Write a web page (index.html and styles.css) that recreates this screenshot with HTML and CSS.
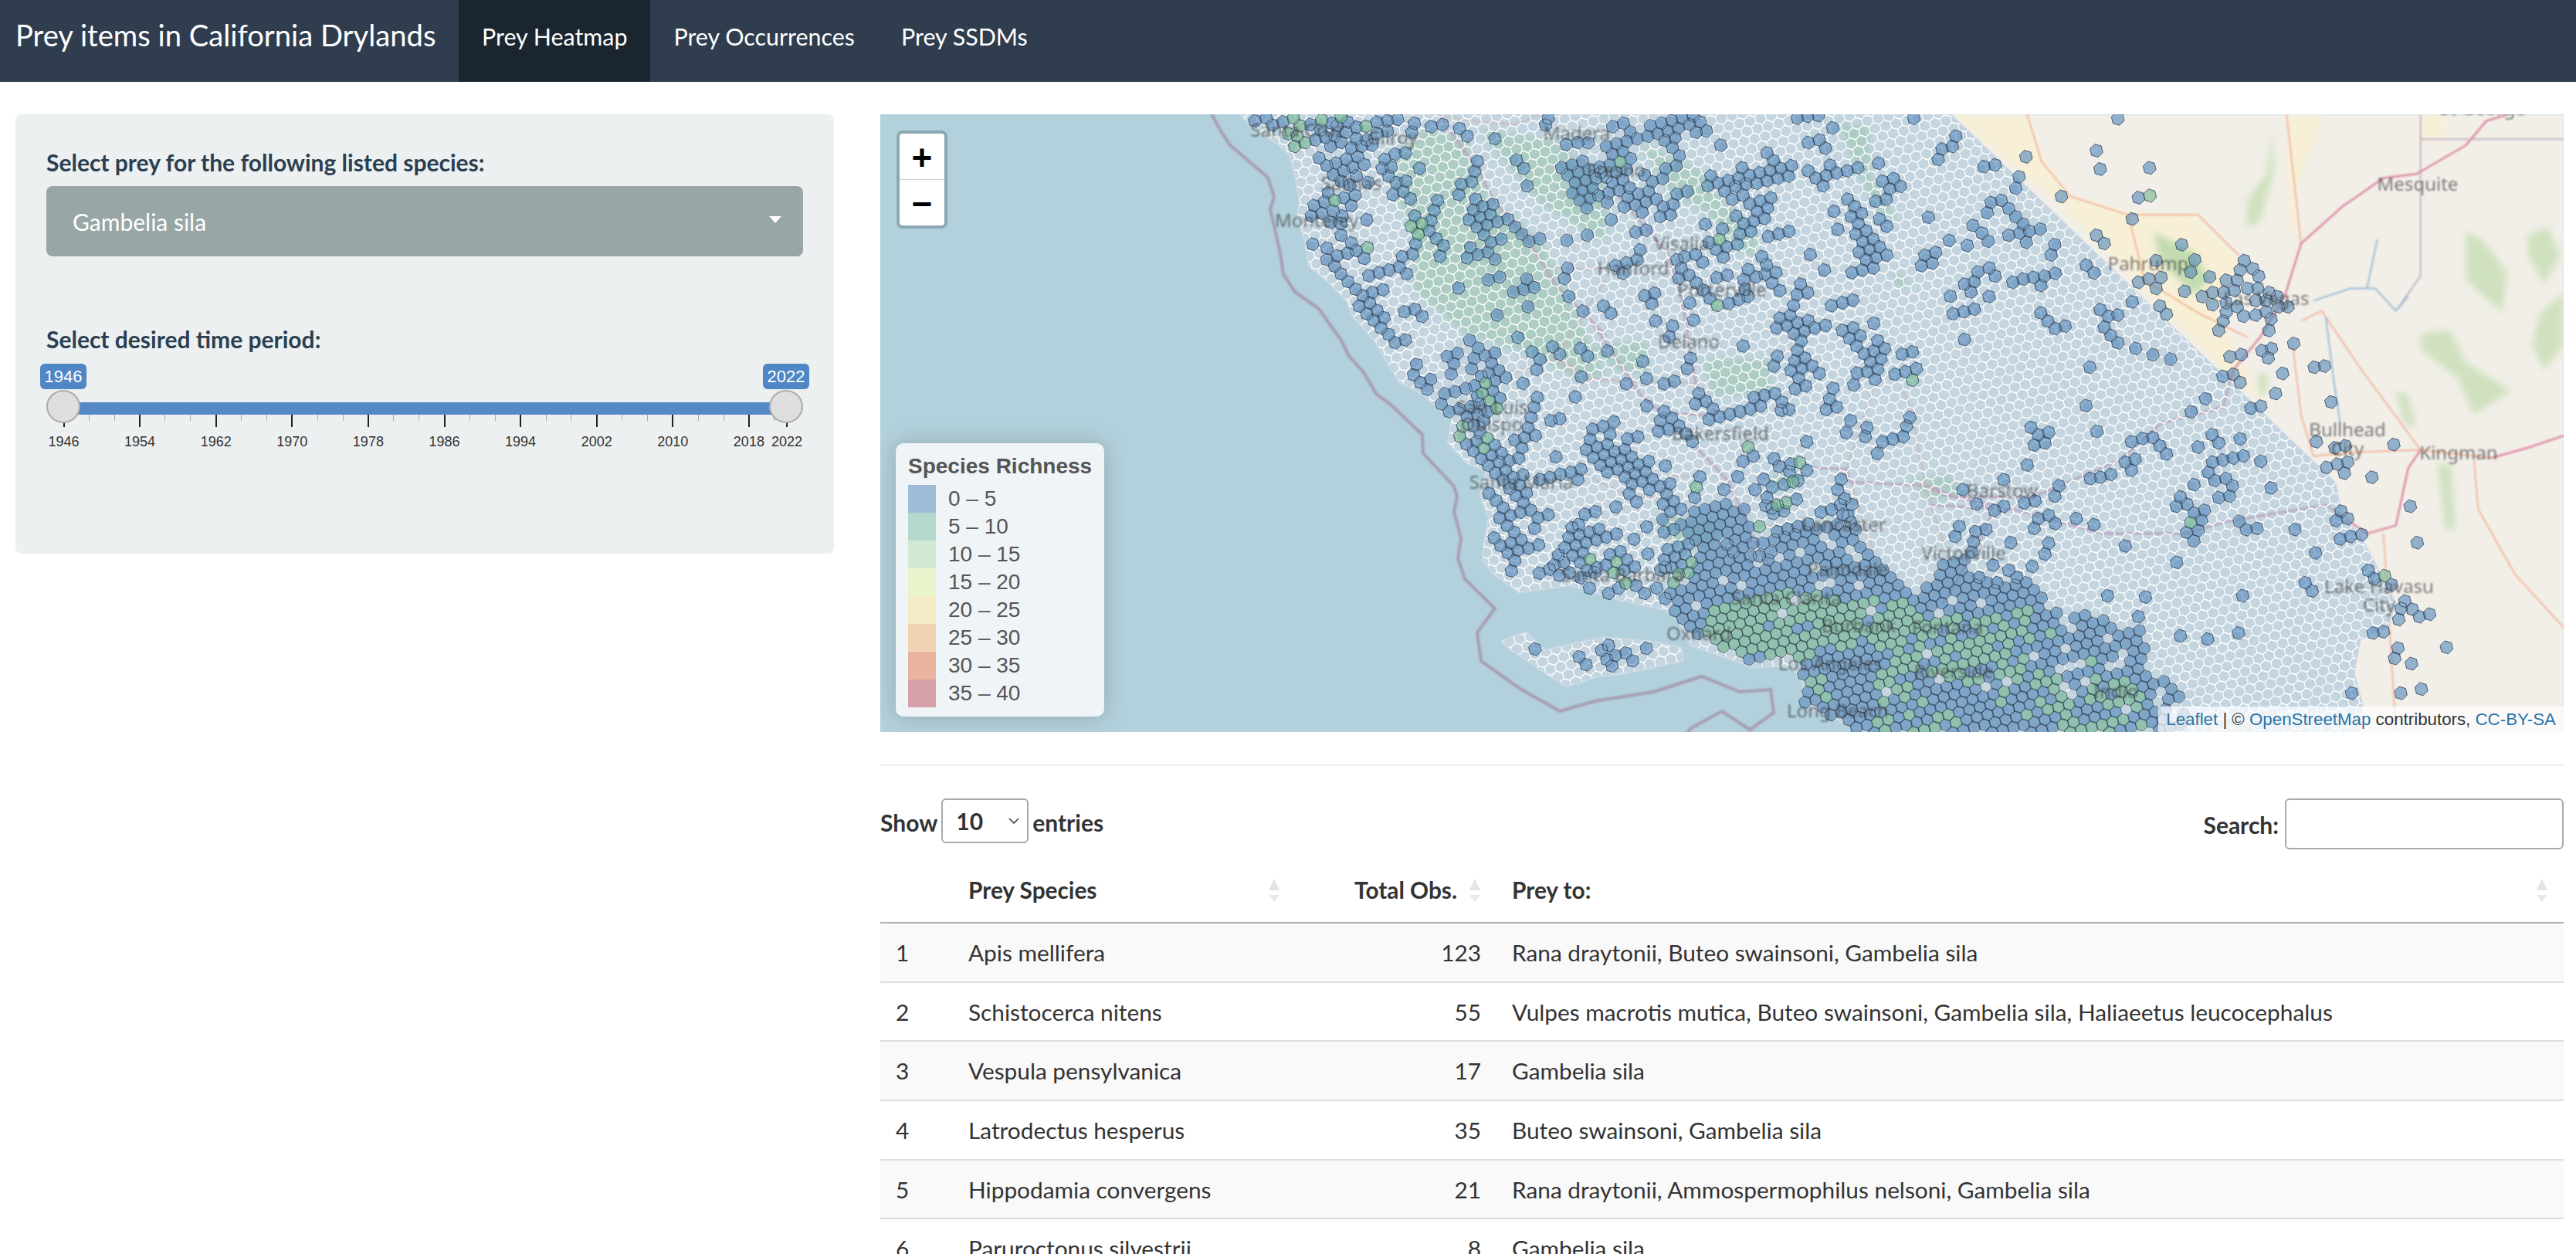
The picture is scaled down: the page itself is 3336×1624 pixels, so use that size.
FILE: index.html
```html
<!DOCTYPE html>
<html lang="en">
<head>
    <meta charset="UTF-8">
    <title>Prey items in California Drylands</title>
    <link rel="stylesheet" href="styles.css">
</head>
<body>
    <nav class="navbar">
        <a class="brand">Prey items in California Drylands</a>
        <a class="nav-item active">Prey Heatmap</a>
        <a class="nav-item">Prey Occurrences</a>
        <a class="nav-item">Prey SSDMs</a>
    </nav>

    <div class="page">
        <aside class="sidebar">
            <label class="field-label">Select prey for the following listed species:</label>
            <div class="picker">
                <span>Gambelia sila</span>
                <i class="caret"></i>
            </div>

            <label class="field-label period-label">Select desired time period:</label>
            <div class="slider">
                <span class="badge badge-from">1946</span>
                <span class="badge badge-to">2022</span>
                <div class="slider-bar"></div>
                <div class="minor-ticks"></div>
                <i class="tick" style="left: 21.5px"></i><span class="tick-label" style="left: 21.5px">1946</span>
                <i class="tick" style="left: 120.1px"></i><span class="tick-label" style="left: 120.1px">1954</span>
                <i class="tick" style="left: 218.7px"></i><span class="tick-label" style="left: 218.7px">1962</span>
                <i class="tick" style="left: 317.3px"></i><span class="tick-label" style="left: 317.3px">1970</span>
                <i class="tick" style="left: 415.9px"></i><span class="tick-label" style="left: 415.9px">1978</span>
                <i class="tick" style="left: 514.5px"></i><span class="tick-label" style="left: 514.5px">1986</span>
                <i class="tick" style="left: 613.1px"></i><span class="tick-label" style="left: 613.1px">1994</span>
                <i class="tick" style="left: 711.7px"></i><span class="tick-label" style="left: 711.7px">2002</span>
                <i class="tick" style="left: 810.3px"></i><span class="tick-label" style="left: 810.3px">2010</span>
                <i class="tick" style="left: 908.9px"></i><span class="tick-label" style="left: 908.9px">2018</span>
                <i class="tick" style="left: 958.1px"></i><span class="tick-label" style="left: 958.1px">2022</span>
                <span class="handle handle-from"></span>
                <span class="handle handle-to"></span>
            </div>
        </aside>

        <main class="content">
            <div class="map" id="map">
                <div class="zoom-control">
                    <a>+</a>
                    <a>&minus;</a>
                </div>
                <div class="legend">
                    <strong>Species Richness</strong>
                    <div class="legend-row"><i class="c1"></i>0 &ndash; 5</div>
                    <div class="legend-row"><i class="c2"></i>5 &ndash; 10</div>
                    <div class="legend-row"><i class="c3"></i>10 &ndash; 15</div>
                    <div class="legend-row"><i class="c4"></i>15 &ndash; 20</div>
                    <div class="legend-row"><i class="c5"></i>20 &ndash; 25</div>
                    <div class="legend-row"><i class="c6"></i>25 &ndash; 30</div>
                    <div class="legend-row"><i class="c7"></i>30 &ndash; 35</div>
                    <div class="legend-row"><i class="c8"></i>35 &ndash; 40</div>
                </div>
                <div class="attribution"><a>Leaflet</a> | &copy; <a>OpenStreetMap</a> contributors, <a>CC-BY-SA</a></div>
            </div>

            <hr class="divider">

            <div class="table-controls">
                <div class="length-control">
                    <span>Show</span>
                    <div class="length-select">10<svg width="14" height="8" viewBox="0 0 14 8"><path d="M1 1l6 6 6-6" fill="none" stroke="#333" stroke-width="1.5"/></svg></div>
                    <span>entries</span>
                </div>
                <div class="search-control">
                    <span>Search:</span>
                    <div class="search-input"></div>
                </div>
            </div>

            <table class="prey-table">
                <colgroup>
                    <col class="col-num"><col class="col-species"><col class="col-total"><col>
                </colgroup>
                <thead>
                    <tr>
                        <th></th>
                        <th class="sortable">Prey Species</th>
                        <th class="sortable total-head">Total Obs.</th>
                        <th class="sortable">Prey to:</th>
                    </tr>
                </thead>
                <tbody>
                    <tr><td>1</td><td>Apis mellifera</td><td class="num">123</td><td>Rana draytonii, Buteo swainsoni, Gambelia sila</td></tr>
                    <tr><td>2</td><td>Schistocerca nitens</td><td class="num">55</td><td>Vulpes macrotis mutica, Buteo swainsoni, Gambelia sila, Haliaeetus leucocephalus</td></tr>
                    <tr><td>3</td><td>Vespula pensylvanica</td><td class="num">17</td><td>Gambelia sila</td></tr>
                    <tr><td>4</td><td>Latrodectus hesperus</td><td class="num">35</td><td>Buteo swainsoni, Gambelia sila</td></tr>
                    <tr><td>5</td><td>Hippodamia convergens</td><td class="num">21</td><td>Rana draytonii, Ammospermophilus nelsoni, Gambelia sila</td></tr>
                    <tr><td>6</td><td>Paruroctonus silvestrii</td><td class="num">8</td><td>Gambelia sila</td></tr>
                </tbody>
            </table>
        </main>
    </div>

    <script src="map.js"></script>
</body>
</html>
```

FILE: styles.css
```css
html, body {
    height: 100%;
    margin: 0;
    overflow: hidden;
}
body {
    font-family: Lato, "Liberation Sans", sans-serif;
    font-size: 30px;
    color: #333;
    background-color: #fff;
}
.navbar {
    display: flex;
    align-items: stretch;
    height: 106px;
    background-color: #2f3d4f;
    color: #fff;
}
.brand {
    width: 574px;
    margin-left: 20px;
    font-size: 38.2px;
    line-height: 90px;
    white-space: nowrap;
}
.nav-item {
    padding: 0 30px;
    font-size: 30.4px;
    line-height: 94px;
    white-space: nowrap;
}
.nav-item.active {
    background-color: #1b252f;
}
.page {
    display: flex;
    gap: 60px;
    padding: 42px 16px 0 20px;
}
.sidebar {
    flex: 0 0 1060px;
    box-sizing: border-box;
    height: 569px;
    padding: 40px;
    background-color: #ecf0f1;
    border-radius: 8px;
}
.field-label {
    display: block;
    height: 53px;
    line-height: 44px;
    font-weight: bold;
    color: #2c3e50;
}
.picker {
    display: flex;
    align-items: center;
    justify-content: space-between;
    height: 91px;
    padding: 0 28px 0 34px;
    background-color: #98a6a6;
    border-radius: 8px;
    color: #fff;
}
.caret {
    width: 0;
    height: 0;
    margin-top: -4px;
    border-left: 8px solid transparent;
    border-right: 8px solid transparent;
    border-top: 9px solid #fff;
}
.period-label {
    margin-top: 85px;
    height: 54px;
}
.slider {
    position: relative;
    height: 120px;
}
.badge {
    position: absolute;
    top: 0;
    width: 60px;
    height: 33px;
    line-height: 33px;
    text-align: center;
    font-family: "Liberation Sans", sans-serif;
    font-size: 22px;
    color: #fff;
    background-color: #4f86c6;
    border-radius: 6px;
}
.badge-from {
    left: -8px;
}
.badge-to {
    right: -8px;
}
.slider-bar {
    position: absolute;
    top: 50px;
    left: 20px;
    right: 20px;
    height: 16px;
    background-color: #5588c6;
}
.minor-ticks {
    position: absolute;
    top: 66px;
    left: 21.5px;
    width: 937px;
    height: 8px;
    background: repeating-linear-gradient(90deg, #aaa 0, #aaa 1px, transparent 1px, transparent 32.87px);
}
.tick {
    position: absolute;
    top: 66px;
    width: 2px;
    height: 16px;
    background-color: #222;
}
.tick-label {
    position: absolute;
    top: 90px;
    width: 60px;
    margin-left: -29px;
    text-align: center;
    font-family: "Liberation Sans", sans-serif;
    font-size: 18px;
    line-height: 22px;
    color: #333;
}
.handle {
    position: absolute;
    top: 34px;
    width: 44px;
    height: 43px;
    box-sizing: border-box;
    background-color: #dedede;
    border: 2px solid #ababab;
    border-radius: 50%;
}
.handle-from {
    left: 0;
}
.handle-to {
    right: 0;
}
.content {
    flex: 1;
    min-width: 0;
}
.map {
    position: relative;
    height: 800px;
    overflow: hidden;
    background-color: #b3d1dc;
}
.map svg {
    display: block;
}
.zoom-control {
    position: absolute;
    top: 21px;
    left: 21px;
    width: 58px;
    border: 4px solid #8ba7b1;
    border-radius: 8px;
    background-color: #fff;
}
.zoom-control a {
    display: block;
    height: 59px;
    line-height: 62px;
    text-align: center;
    font-family: "Liberation Sans", sans-serif;
    font-weight: bold;
    font-size: 46px;
    color: #000;
}
.zoom-control a:first-child {
    border-bottom: 1px solid #ccc;
}
.legend {
    position: absolute;
    left: 20px;
    bottom: 20px;
    box-sizing: border-box;
    width: 270px;
    height: 354px;
    padding: 14px 16px;
    font-family: "Liberation Sans", sans-serif;
    font-size: 28px;
    color: #555;
    background-color: #eff4f7;
    border-radius: 10px;
    box-shadow: 0 0 30px rgba(0, 0, 0, 0.2);
}
.legend strong {
    display: block;
    height: 40px;
    line-height: 32px;
    white-space: nowrap;
}
.legend-row {
    display: flex;
    align-items: center;
    gap: 16px;
    height: 36px;
}
.legend-row i {
    width: 36px;
    height: 36px;
}
.c1 { background-color: #9ebcd7; }
.c2 { background-color: #b4d9cc; }
.c3 { background-color: #d1e9d3; }
.c4 { background-color: #e8f4cc; }
.c5 { background-color: #f3ecc6; }
.c6 { background-color: #f0d3b3; }
.c7 { background-color: #e8b4a0; }
.c8 { background-color: #d8a0a8; }
.attribution {
    position: absolute;
    right: 0;
    bottom: 0;
    padding: 0 10px;
    height: 33px;
    line-height: 33px;
    font-family: "Liberation Sans", sans-serif;
    font-size: 22.3px;
    color: #333;
    background-color: rgba(255, 255, 255, 0.7);
}
.attribution a {
    color: #2a74a8;
}
.divider {
    height: 2px;
    margin: 42px 0;
    border: none;
    background-color: #ecf0f1;
}
.table-controls {
    display: flex;
    justify-content: space-between;
    height: 76px;
    font-weight: bold;
}
.length-control {
    display: flex;
    align-items: flex-start;
    gap: 5px;
    line-height: 62px;
}
.length-select {
    display: flex;
    align-items: center;
    justify-content: space-between;
    box-sizing: border-box;
    width: 113px;
    height: 58px;
    padding: 0 10px 0 17px;
    border: 2px solid #aaa;
    border-radius: 6px;
}
.search-control {
    display: flex;
    align-items: flex-start;
    gap: 8px;
    line-height: 68px;
}
.search-input {
    box-sizing: border-box;
    width: 361px;
    height: 66px;
    border: 2px solid #aaa;
    border-radius: 6px;
}
.prey-table {
    width: 100%;
    table-layout: fixed;
    border-collapse: collapse;
    font-size: 29.8px;
}
.col-num { width: 94px; }
.col-species { width: 444px; }
.col-total { width: 260px; }
.prey-table th {
    position: relative;
    height: 84px;
    padding: 0 20px;
    text-align: left;
    border-bottom: 2px solid #b0b0b0;
}
.prey-table th.total-head {
    padding-right: 51px;
    text-align: right;
}
.prey-table th.sortable::before,
.prey-table th.sortable::after {
    content: "";
    position: absolute;
    right: 21px;
    border-left: 7.5px solid transparent;
    border-right: 7.5px solid transparent;
}
.prey-table th.sortable::before {
    top: 28px;
    border-bottom: 15px solid #e4e4e4;
}
.prey-table th.sortable::after {
    top: 49px;
    border-top: 9px solid #e8e8e8;
}
.prey-table td {
    height: 74.7px;
    padding: 0 20px;
    white-space: nowrap;
    border-bottom: 2px solid #ddd;
}
.prey-table td.num {
    text-align: right;
}
.prey-table tbody tr:nth-child(odd) {
    background-color: #f9f9f9;
}
```

FILE: map.js
```js
// Draws the basemap and the hexagon richness layer. Point lists were read off
// the map at different crops, so each one carries its own offset and scale.
const W = 2180, H = 800;

// hex lattice
const ax = 13.65, ay = -3.3, bx = 3.85, by = -13.15;
const R = 8.1;
const tilt = Math.atan2(ay, ax) + Math.PI / 6;

function hexPath(cx, cy, r) {
    let d = '';
    for (let k = 0; k < 6; k++) {
        const t = tilt + k * Math.PI / 3;
        d += (k ? 'L' : 'M') + (cx + r * Math.cos(t)).toFixed(1) + ' ' + (cy + r * Math.sin(t)).toFixed(1);
    }
    return d + 'Z';
}

function conv(o, pts) {
    const out = [];
    for (let k = 0; k < pts.length; k += 2) {
        out.push([o[0] + pts[k] / o[2], o[1] + pts[k + 1] / o[3]]);
    }
    return out;
}

function line(pts) {
    return 'M' + pts.map(p => p[0].toFixed(1) + ' ' + p[1].toFixed(1)).join('L');
}

const Z4 = [1360, -18, 1.875, 1.889];
const Z6 = [760, 352, 2.24, 2.98];
const Z7 = [440, 0, 3, 3];
const Z8 = [920, 0, 3, 3];
const Z9 = [660, 282, 3, 3];
const Z10 = [1010, 492, 3, 3];
const RAW = [0, 0, 1, 1];

// coast, north to south
const coast = [467,0, 473,8, 490,23, 513,37, 530,52, 537,77, 543,113, 540,133, 550,163, 555,197, 580,217, 603,240, 613,263, 640,293, 660,327, 673,347, 703,363, 733,390, 740,395, 735,425, 760,452, 785,462, 777,495, 788,522, 782,555, 780,577, 793,594, 827,619, 894,610, 961,630, 1028,644, 1050,688, 1131,716, 1180,714, 1195,738, 1193,765, 1282,802];
const river = [1915,802, 1920,765, 1909,723, 1917,681, 1952,665, 1963,633, 1933,575, 1915,543, 1893,517, 1885,477, 1387,0];
const island = conv(Z6, [100,985, 170,950, 225,1020, 340,985, 400,970, 530,985, 620,1010, 625,1060, 450,1110, 380,1120, 290,1160, 230,1110, 130,1020]);

const coastPts = conv(RAW, coast);
const caPts = coastPts.concat(conv(RAW, river));
const landPts = coastPts.concat(conv(RAW, [2180,802, 2180,0]));

const sea = conv(RAW, [429,0, 440,20, 453,40, 473,57, 502,82, 510,107, 505,123, 518,180, 522,207, 537,230, 568,252, 597,293, 607,313, 625,333, 643,363, 660,375, 702,415, 703,439, 743,482, 747,495, 743,515, 752,549, 748,575, 757,602, 796,640, 773,671, 778,708, 827,743, 880,773, 925,760, 1001,748, 1064,728, 1113,748, 1153,745, 1157,775, 1126,797, 1090,773, 1050,795, 1043,803]);

const desert = [
    conv(Z4, [50,35, 230,35, 270,140, 340,235, 480,275, 640,280, 760,400, 690,500, 800,730, 740,690, 300,240]),
    conv(Z4, [865,35, 955,35, 890,210, 885,340, 870,300]),
    conv(Z4, [1190,35, 1250,35, 1250,90, 1190,100])
];
const nevadaParks = [
    conv(Z4, [830,70, 835,170, 800,300, 765,310, 770,240, 815,180]),
    conv(Z4, [1190,570, 1260,560, 1300,640, 1410,710, 1320,770, 1280,680, 1190,610]),
    conv(Z4, [1300,320, 1340,340, 1400,420, 1390,520, 1300,440]),
    conv(Z4, [1450,330, 1500,310, 1530,380, 1490,450, 1450,380]),
    conv(Z4, [1480,520, 1538,470, 1538,600, 1490,660, 1460,600]),
    conv(Z4, [1130,710, 1160,720, 1180,800, 1150,790]),
    conv(Z4, [1230,890, 1265,890, 1275,1050, 1250,1050]),
    conv(Z4, [795,665, 820,670, 815,720, 798,720])
];
const parks = [
    conv(Z4, [540,320, 640,370, 680,440, 640,475, 560,400]),
    conv(Z7, [700,120, 800,60, 950,90, 1050,330, 1250,500, 1400,800, 1500,1020, 1380,1030, 1250,950, 950,850, 750,680, 760,500, 680,300]),
    conv(Z7, [1000,60, 1300,100, 1500,260, 1500,500, 1250,350]),
    conv(Z8, [190,110, 340,180, 420,210, 480,300, 650,470, 640,560, 560,520, 470,400, 300,300]),
    conv(Z8, [430,950, 700,950, 700,1080, 480,1100]),
    conv(Z8, [960,30, 1080,50, 1090,250, 1200,420, 1100,360, 1020,180]),
    conv(Z8, [0,900, 220,880, 220,1010, 100,1000]),
    conv(Z8, [1170,610, 1240,640, 1220,680, 1180,660]),
    conv(Z6, [550,500, 750,520, 700,640, 570,590]),
    conv(Z6, [880,340, 960,330, 940,400, 880,400]),
    conv(Z6, [1280,360, 1400,340, 1440,420, 1340,450])
];

const highways = [
    conv(Z7, [850,0, 890,60, 1000,210, 1060,330, 1200,490, 1300,660, 1500,860]),
    conv(Z8, [0,800, 100,950, 200,1100, 280,1160, 480,1170]),
    conv(Z8, [100,310, 300,540, 350,700, 410,1060, 500,1170]),
    conv(Z6, [660,230, 760,370, 820,560, 880,700]),
    conv(Z6, [1000,315, 1100,320, 1110,370, 1340,385, 1420,430, 1530,460, 1500,570, 1380,840]),
    conv(Z4, [900,350, 1000,260, 1100,190, 1180,180, 1300,110, 1350,50, 1400,35]),
    conv(Z4, [0,950, 50,970, 250,970, 460,880, 560,790, 710,750, 735,660, 800,580, 860,480, 900,350]),
    conv(Z4, [0,990, 200,1000, 420,1060, 620,1060, 720,1030, 960,990, 1060,1060, 1130,1040, 1160,900, 1190,855]),
    conv(Z4, [1360,875, 1450,850, 1538,820])
];
const minorRoads = [
    conv(Z4, [235,35, 270,150, 340,235, 480,280, 490,320, 520,440, 650,520, 770,580]),
    conv(Z4, [480,280, 650,280, 750,380]),
    conv(Z4, [865,35, 900,350]),
    conv(Z4, [880,600, 900,770, 930,870, 1040,860, 1190,855, 1040,650, 950,515, 900,540]),
    conv(Z4, [1190,855, 1360,875]),
    conv(Z4, [1320,880, 1330,1000, 1420,1160, 1538,1290]),
    conv(Z4, [1100,1060, 1130,1540]),
    conv(Z7, [840,0, 1000,30, 1150,40, 1240,0]),
    conv(Z7, [1280,600, 1500,600]),
    conv(Z7, [1500,640, 1300,950, 1400,1030, 1500,1030]),
    conv(Z9, [470,160, 660,100, 780,185, 1200,200]),
    conv(Z9, [750,550, 930,640, 1060,640, 1080,560, 1200,560]),
    conv(Z6, [1180,0, 1100,320, 1180,640]),
    conv(Z6, [1260,0, 1290,100, 1330,390, 1390,640]),
    conv(Z6, [860,540, 1100,540, 1090,320])
];
const stateLine = [
    conv(Z4, [1190,35, 1190,430, 1130,515]),
    conv(Z4, [1190,95, 1538,95])
];
const water = [
    conv(Z4, [930,490, 1020,460, 1080,460, 1130,515, 1160,480]),
    conv(Z4, [1085,340, 1060,460]),
    conv(Z4, [960,530, 980,690, 995,790])
];

const labels = [
    ['Santa Cruz',540,23], ['Gilroy',663,33], ['Madera',902,27], ['Salinas',610,92], ['Monterey',565,140],
    ['Fresno',953,75], ['Visalia',1038,170], ['Hanford',975,202], ['Porterville',1090,230], ['Delano',1047,297],
    ['San Luis',792,382], ['Obispo',792,404], ['Bakersfield',1088,416], ['Santa Maria',830,479], ['Lancaster',1248,534],
    ['Santa Barbara',961,599], ['Palmdale',1253,592], ['Santa Clarita',1173,629], ['Oxnard',1060,675], ['Burbank',1267,665],
    ['Fontana',1382,667], ['Los Angeles',1230,714], ['Riverside',1390,724], ['Long Beach',1240,775], ['Indio',1600,750],
    ['Barstow',1453,490], ['Victorville',1403,571], ['Pahrump',1642,196], ['Las Vegas',1795,241], ['Mesquite',1991,93],
    ['Bullhead',1900,411], ['City',1900,436], ['Kingman',2044,441], ['Lake Havasu',1941,614], ['City',1941,638], ['St George',2075,-5]
];

// richness cells placed where they were read off; near-duplicates from
// overlapping crops are dropped
const placed = [];
const buckets = new Map();
function nearPlaced(x, y, dist) {
    const bx0 = Math.floor(x / 16), by0 = Math.floor(y / 16);
    for (let i = bx0 - 1; i <= bx0 + 1; i++) {
        for (let j = by0 - 1; j <= by0 + 1; j++) {
            const list = buckets.get(i + ',' + j);
            if (list && list.some(c => Math.hypot(c[0] - x, c[1] - y) < dist)) return true;
        }
    }
    return false;
}
function place(x, y, kind) {
    const key = Math.floor(x / 16) + ',' + Math.floor(y / 16);
    if (!buckets.has(key)) buckets.set(key, []);
    const c = [x, y, kind, 8.7];
    buckets.get(key).push(c);
    placed.push(c);
}
function add(o, pts, kind) {
    conv(o, pts).forEach(p => {
        if (!nearPlaced(p[0], p[1], 6.5)) place(p[0], p[1], kind);
    });
}

// greens first so they win against blue duplicates
add(Z7, [285,15,310,45,265,75,300,85,290,125,330,110,395,22,470,10,567,47,445,335,784,425,743,435,770,465,573,518,1032,1045,1020,1083,1047,1112,1075,1142], 'g');
add(Z8, [115,185,500,487,492,742,1250,1033], 'g');
add(Z9, [370,198,358,237,387,265,415,297,283,367,272,405,378,413,365,452,777,883,880,893,870,935,1172,895,1160,935,1122,940], 'g');
add(Z6, [360,680,435,685,420,730,460,760,605,730,665,390,815,235,965,295,945,370,900,460,925,450], 'g');
add(Z4, [533,233,632,1033,1103,1163], 'g');
add(Z10, [490,30,385,125], 'g');

add(Z10, [410,45,450,40,530,20,440,75,480,65,625,70,665,60,700,40,745,40,710,80,740,110,350,240,385,240,400,190,430,225,360,190,260,195,285,225,455,145,495,135,535,125,575,115], 'b');

add(Z7, [135,25,180,15,205,42,245,30,350,40,390,60,435,35,455,45,495,30,530,50,610,30,650,25,690,20,650,65,610,75,570,100,530,95,490,70,445,85,410,90,370,100,430,125,470,110,510,130,550,125,590,120,385,170,415,200,450,190,490,175,535,165,560,195,515,205,480,220,440,235,470,260,530,240,575,265,505,275,420,305,480,325,525,315,405,340,365,355,440,375,395,385,355,395,475,395,510,355,430,420,470,425,755,35,745,70,820,48,865,40,930,55,960,85,1068,95,720,150,680,155,640,175,630,210,665,205,775,210,655,240,685,265,722,260,712,300,672,312,740,328,1000,183,990,222,978,262,938,272,928,312,1152,178,1180,210,1193,278,845,335,832,373,820,412,757,395,812,452,840,483,868,510,855,552,760,503,748,543,708,553,697,593,657,605,618,615,578,627,725,620,570,410,530,530,495,540,510,500,470,470,360,505,415,520,455,550,415,565,445,590,560,560,470,620,497,650,527,680,592,692,633,682,555,705,582,733,540,745,610,762,570,775,637,790,597,800,625,830,655,855,680,887,720,877,717,767,757,758,785,785,993,330,1020,358,1060,350,985,372,1010,400,1050,390,968,410,998,437,1037,430,1078,417,1118,408,1145,437,1172,465,1200,493,1242,483,1025,468,1052,497,1092,485,973,518,960,558,1002,545,1040,535,1068,563,1348,490,1427,470,1042,643,1086,632,1192,640,1220,672,1180,680,1140,690,927,675,1197,748,1077,780,1157,867,1350,598,1338,638,1355,708,1410,765,1490,745,1212,923,1243,952,1230,992,1292,903,1320,932,1400,910,1428,940,1403,1020,1177,1045,1380,1098,1232,1100,1220,1138,1208,1178,1285,1190,1320,1183,1345,118,1390,110,1430,110,1408,183,1367,197,1327,207,1350,235,1392,225,1432,215,1380,265,1420,257,1460,250,1408,295,1448,287,1370,305,1398,333,1437,325,1425,363,1480,225,970,878,1003,908,1030,937,1068,927,882,940,922,928,908,968,898,1008,987,948,978,988,1015,1018,1055,967,1045,1005,1083,995,1110,1023,1068,1035,990,1055,1060,1075,1087,1103,955,1065,913,1077,873,1085,860,1125,890,1155,930,1145,975,1135,1000,1095,1010,1125,960,1175,1000,1165,1040,1155,763,972,752,1012,778,1042,818,1030,805,1068,1275,15,1265,42], 'b');

add(Z8, [85,48,127,35,153,68,180,95,232,45,222,85,275,35,260,75,300,65,315,25,355,15,340,55,385,40,425,30,410,70,450,65,328,92,288,102,318,130,345,162,333,200,292,212,398,5,505,120,60,125,100,115,140,105,125,145,85,155,155,172,75,195,35,205,100,225,140,215,60,245,20,255,125,255,85,265,40,235,210,235,240,262,280,250,150,285,110,295,70,305,30,315,0,280,185,310,225,300,65,342,145,322,175,352,130,360,215,340,255,330,200,380,282,360,320,350,335,310,375,300,270,397,310,390,80,410,445,427,175,458,215,450,192,527,97,588,140,577,180,565,125,618,803,15,843,8,885,5,940,53,845,110,888,100,912,132,1255,15,1418,85,1405,125,1365,135,1350,175,1118,190,685,150,710,180,780,200,738,210,697,218,768,240,727,248,685,258,657,227,617,237,588,208,467,240,495,267,455,278,535,258,575,248,563,280,603,270,645,268,520,298,592,315,550,330,700,325,658,337,618,348,687,363,647,377,565,395,675,405,633,415,595,425,622,455,580,465,512,445,460,498,528,515,570,505,488,525,515,555,690,475,730,465,770,455,845,220,875,248,915,238,930,198,955,228,997,220,1038,208,903,278,998,330,1025,358,1052,385,1012,397,1040,425,945,377,960,447,1030,465,1070,453,1122,407,1150,435,1097,485,1057,495,1122,515,1083,525,1150,547,1043,535,1108,557,1070,565,1098,597,1055,605,1015,615,1133,260,1177,250,1203,280,1162,290,1148,330,1107,338,1312,400,1393,490,1463,510,1485,432,1298,548,1340,537,1327,578,1285,588,1452,660,1490,650,1477,690,1397,707,1408,775,1450,767,1490,757,1452,875,853,545,908,605,665,553,683,585,612,603,643,632,720,615,677,622,595,642,705,655,735,685,530,625,490,635,335,565,365,553,408,545,435,575,352,600,342,637,382,625,410,655,437,683,463,715,537,735,575,720,610,708,600,680,385,733,210,705,248,695,237,735,48,745,78,773,252,803,318,822,305,865,400,800,815,660,843,693,802,700,788,743,735,792,775,782,803,810,845,802,722,830,762,820,790,852,830,842,870,830,912,820,818,880,803,917,832,947,793,958,860,978,820,987,778,995,888,1007,808,1025,795,1067,835,1055,935,743,978,732,1018,722,978,840,1020,830,1047,860,1005,870,1033,900,1062,930,1115,880,1100,920,1142,910,1087,962,1128,950,1115,990,1075,1000,1035,1005,1022,1052,1105,1030,1100,812,592,900,725,940,712,978,65,920,202,960,388,948,375,988,217,1027,138,1047,285,1047,325,1037,1182,1010,1223,1000,1265,988,1210,932,1250,923,942,1065,928,1107,955,1137,915,1147,420,1085,407,1125,447,1115,475,1145,635,1100,675,1092,715,1085,743,1118,770,1147,660,1133,620,1145,580,1155,540,1165,500,1175,460,1185,740,1150,218,1133,285,1155,315,1180,90,1195,1240,1178,1010,1190,270,1190], 'b');

add(Z9, [20,40,60,30,105,125,92,163,118,195,160,183,147,222,222,95,262,82,250,122,238,162,312,32,342,62,330,100,370,90,408,80,398,120,318,140,345,170,423,150,452,177,410,188,330,210,295,220,253,230,213,240,200,278,230,310,270,298,312,290,398,225,345,275,427,257,300,330,340,320,380,310,325,365,365,345,297,435,350,392,407,440,337,425,325,462,395,478,355,492,382,518,433,470,425,505,463,500,410,548,450,537,480,565,440,575,517,555,503,595,465,608,490,635,530,625,385,627,413,655,518,662,440,683,507,700,547,692,468,713,427,722,575,722,455,752,562,763,483,778,405,800,430,830,470,820,510,808,458,858,497,848,538,840,578,827,485,888,472,928,555,78,582,108,570,147,632,57,660,85,742,65,768,97,848,73,743,172,517,197,572,253,560,293,548,332,537,372,565,402,523,410,485,420,513,450,500,490,617,350,655,342,645,485,720,250,983,113,998,178,918,200,1065,200,1105,190,1000,287,1170,100,1158,140,1068,310,1055,348,1095,335,1043,385,1083,378,1123,365,1150,395,1175,425,788,378,828,367,870,358,855,397,778,417,805,447,845,437,763,457,790,487,832,477,818,517,872,465,858,505,845,543,885,533,912,457,923,415,963,407,898,495,938,485,925,525,965,515,1005,503,952,550,993,543,913,563,940,590,980,580,1020,572,1050,600,1008,612,1088,590,1075,630,930,628,958,660,1062,668,1102,658,1090,697,1130,688,878,680,758,708,798,698,998,757,1065,777,1103,767,948,805,1002,862,662,553,703,545,742,533,730,573,622,565,582,573,1070,520,615,710,880,785,812,767,733,748,707,760,695,798,735,788,775,778,840,797,802,807,762,818,722,828,680,837,710,868,750,858,655,867,638,905,675,895,740,895,803,915,855,865,895,853,840,905,920,885,950,912,620,922,580,937,658,945,698,935,765,925,910,925,1080,845,1120,835,1160,825,1067,885,1107,873,1147,863,1133,905,1095,915,1052,925], 'b');

add(Z6, [130,715,210,725,250,700,290,690,330,740,370,720,355,780,410,800,440,780,480,700,515,800,490,770,550,780,590,800,575,700,575,820,197,1015,325,1045,345,1075,390,1020,410,1000,430,1040,405,1055,460,1030,480,1060,520,1012,420,1080,675,350,745,400,785,350,660,430,835,400,830,270,800,290,890,280,905,310,940,300,985,325,960,365,935,330,860,360,885,390,920,380,870,430,965,440,885,470,915,490,1085,360,1075,400,1095,435,1110,460,1105,500,1110,135,1100,180,1160,160,1155,195,1205,215,1235,205,1265,195,1275,155,1285,120,1190,260,985,215,1438,400,1478,455,1530,480], 'b');

add(Z4, [455,45,60,88,25,118,52,113,18,143,130,162,157,158,232,138,403,123,412,168,532,165,215,187,207,215,318,235,505,238,147,250,172,245,138,275,190,265,207,285,225,303,105,305,125,325,140,345,190,330,217,325,240,320,267,315,233,347,45,343,90,355,12,375,5,398,302,353,293,378,490,290,403,330,422,350,378,403,397,422,610,353,642,390,632,420,548,392,530,437,560,433,505,445,548,460,617,467,115,420,143,410,157,430,82,450,108,440,98,468,48,478,142,480,200,445,225,437,250,433,277,430,303,423,268,453,678,432,762,392,752,415,783,412,797,430,718,440,745,440,770,460,660,480,685,470,712,470,738,465,795,460,822,470,685,500,718,495,745,505,790,490,815,490,842,480,868,505,718,518,760,528,790,525,815,517,845,505,827,535,711,540,700,563,822,563,490,493,557,503,573,523,55,522,82,513,107,512,268,520,285,540,303,558,327,552,412,512,432,528,455,525,422,555,438,575,455,593,82,585,498,607,540,622,583,633,387,653,727,627,755,622,805,612,828,607,820,630,882,595,932,653,957,650,855,668,710,675,735,670,752,690,838,717,973,738,668,730,633,762,778,753,802,748,378,747,244,800,262,818,287,812,252,843,278,838,404,810,488,835,515,827,540,825,557,845,573,865,684,818,700,838,752,828,650,848,937,835,1125,842,982,850,1007,845,235,892,473,885,497,878,488,905,388,925,413,922,438,915,685,885,710,880,735,875,760,870,802,883,675,910,690,930,717,925,733,943,700,972,726,968,640,940,827,948,962,898,988,890,1013,885,1005,912,1072,922,178,928,312,943,302,968,78,952,111,987,153,1000,178,993,228,985,254,980,607,970,597,993,623,988,665,1003,640,1010,658,1027,622,1057,650,1052,640,1078,1165,993,997,1005,985,1028,1013,1023,262,1023,287,1015,252,1047,303,1035,354,1023,397,1038,750,1030,767,1050,793,1047,885,1050,995,1073,1020,1067,1047,1062,1182,1082,195,1082,287,1083,278,1110,473,1090,935,1107,70,1042,60,1067,135,1050,110,1055,105,1080,100,1105,152,1137,598,1130,247,1140,190,1150,162,1180,210,1167,118,1167,1063,1150,1078,1170,1120,1185,910,1180,927,1200,1152,1225,1143,1243,1170,1245,1137,1270,1187,1263,1212,1257,758,1212,430,1212,522,1215,505,1263,748,1303,607,1310,673,1318,1075,1303,1100,1300,1135,1340,1127,1365,1253,1338,1168,1378,1192,1440,1142,1450,1023,1450], 'b');

// dense southern band, filled from the lattice
const dense = conv(Z10, [0,100, 150,30, 320,40, 370,170, 430,200, 470,120, 720,90, 790,170, 830,220, 900,300, 1000,370, 1060,340, 1090,270, 1180,240, 1230,330, 1330,310, 1400,320]).concat(
    conv(RAW, [1520,643, 1584,650, 1637,670, 1643,723, 1690,750, 1690,804, 1282,804]),
    conv(Z10, [530,800, 540,660, 470,620, 370,650, 230,610, 70,490, 0,400])
);
const greens = [
    [480,510,300,130,0.92], [830,500,200,100,0.8], [1200,600,250,130,0.65], [950,720,120,130,0.65],
    [620,750,60,70,0.75], [1000,880,180,60,0.65], [1420,500,120,70,0.3], [60,310,80,60,0.4],
    [1700,800,220,160,0.4], [1420,760,120,100,0.3]
];
const holes = [[590,290],[640,350],[790,350],[830,450],[1000,380],[1130,400],[1100,450],[1270,760],[1360,740],[1440,630],[20,360],[530,235],[240,340],[1560,680],[1640,720],[1780,640],[620,175],[660,200],[760,235]];

function inside(p, poly) {
    let c = false;
    for (let i = 0, j = poly.length - 1; i < poly.length; j = i++) {
        if ((poly[i][1] > p[1]) !== (poly[j][1] > p[1]) &&
            p[0] < (poly[j][0] - poly[i][0]) * (p[1] - poly[i][1]) / (poly[j][1] - poly[i][1]) + poly[i][0]) {
            c = !c;
        }
    }
    return c;
}

let seed = 7321;
function rnd() {
    seed = (seed * 16807) % 2147483647;
    return seed / 2147483647;
}

let lightPath = '';
for (let i = -40; i < 260; i++) {
    for (let j = -160; j < 130; j++) {
        const x = i * ax + j * bx, y = i * ay + j * by;
        if (x < 440 || x > 2190 || y < -12 || y > 812) continue;
        const p = [x, y];
        if (x < 1990) lightPath += hexPath(x, y, R);
        if (inside(p, dense) && inside(p, caPts) && !nearPlaced(x, y, 10)) {
            const z = [(x - 1010) * 3, (y - 492) * 3];
            const isHole = holes.some(h => Math.hypot(h[0] - z[0], h[1] - z[1]) < 22);
            const keep = x > 1520 ? 0.88 : 0.97;
            if (!isHole && rnd() < keep) {
                let g = 0;
                greens.forEach(e => {
                    const d = Math.hypot((z[0] - e[0]) / e[2], (z[1] - e[1]) / e[3]);
                    if (d < 1) g = Math.max(g, e[4]);
                });
                if (Math.hypot((z[0] - 650) / 80, (z[1] - 660) / 60) < 1) g = 0;
                placed.push([x, y, rnd() < g ? 'g' : 'b', 8.4]);
            }
        }
    }
}

let bluePath = '', greenPath = '';
placed.forEach(c => {
    if (c[2] === 'b') bluePath += hexPath(c[0], c[1], c[3]);
    else greenPath += hexPath(c[0], c[1], c[3]);
});

function polys(list, fill) {
    return list.map(p => '<path d="' + line(p) + 'Z" fill="' + fill + '"/>').join('');
}
function strokes(list, color, width) {
    return list.map(p => '<path d="' + line(p) + '" fill="none" stroke="' + color + '" stroke-width="' + width + '" stroke-linejoin="round"/>').join('');
}

const svg = `<svg width="${W}" height="${H}" viewBox="0 0 ${W} ${H}" font-family="'Noto Sans', 'Open Sans', sans-serif" font-size="24">
  <defs>
    <filter id="soft"><feGaussianBlur stdDeviation="0.8"/></filter>
    <filter id="softer"><feGaussianBlur stdDeviation="4"/></filter>
    <clipPath id="ca"><path d="${line(caPts)}Z${line(island)}Z"/></clipPath>
  </defs>
  <g filter="url(#soft)">
    <path d="${line(landPts)}Z" fill="#f2efe9"/>
    <path d="${line(island)}Z" fill="#f2efe9"/>
    <g filter="url(#softer)">${polys(desert, '#f8f0d6')}${polys(nevadaParks, '#d0e1bf')}${polys(parks, '#c2dcb0')}</g>
    ${strokes(minorRoads, '#f3b89a', 2.2)}
    ${strokes(stateLine, '#bfb0c6', 2)}
    ${strokes(water, '#a3c3d8', 2.5)}
    ${strokes(highways, '#e08fa6', 3)}
    <path d="${line(sea)}" fill="none" stroke="#a69bb2" stroke-width="4"/>
  </g>
  <g clip-path="url(#ca)">
    <path d="${lightPath}" fill="#96bbd8" fill-opacity="0.5" stroke="#fff" stroke-width="1.2"/>
  </g>
  <path d="${line(caPts)}Z${line(island)}Z" fill="none" stroke="#d6dbe8" stroke-width="1.2"/>
  <path d="${bluePath}" fill="#5187b9" fill-opacity="0.6" stroke="#26364c" stroke-opacity="0.75" stroke-width="1"/>
  <path d="${greenPath}" fill="#6eb48c" fill-opacity="0.6" stroke="#26364c" stroke-opacity="0.75" stroke-width="1"/>
  <g fill="#333" fill-opacity="0.62" text-anchor="middle" dominant-baseline="middle" filter="url(#soft)">
    ${labels.map(l => '<text x="' + l[1] + '" y="' + l[2] + '">' + l[0] + '</text>').join('')}
  </g>
</svg>`;

document.getElementById('map').insertAdjacentHTML('afterbegin', svg);
```
